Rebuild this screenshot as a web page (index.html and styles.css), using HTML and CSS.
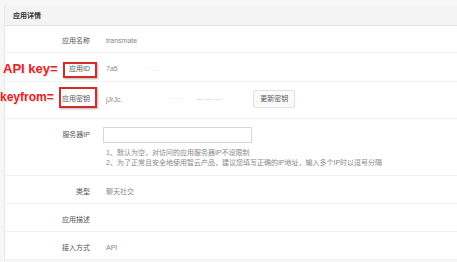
FILE: index.html
```html
<!DOCTYPE html>
<html>

<head>
  <title>应用详情</title>
  <link rel="stylesheet" href="styles.css">
</head>

<body>
  <div class="panel">
    <div class="panel-head">应用详情</div>

    <div class="row row-name">
      <span class="label">应用名称</span>
      <span class="value">transmate</span>
    </div>

    <div class="row row-id">
      <span class="label">应用ID</span>
      <span class="value">7a5<span class="blur">·&nbsp;.&nbsp;.</span></span>
    </div>

    <div class="row row-key">
      <span class="label">应用密钥</span>
      <span class="value">
        jJrJc.
        <span class="blur blur-key">·&nbsp;·&nbsp;·&nbsp;·</span>
        <span class="blur">—&nbsp;—&nbsp;—</span>
        <button class="btn">更新密钥</button>
      </span>
    </div>

    <div class="row row-ip">
      <span class="label">服务器IP</span>
      <div class="value">
        <input class="ip-input">
        <p class="hint">1、默认为空，对访问的应用服务器IP不设限制</p>
        <p class="hint">2、为了正常且安全地使用智云产品，建议您填写正确的IP地址，输入多个IP时以逗号分隔</p>
      </div>
    </div>

    <div class="row row-low">
      <span class="label">类型</span>
      <span class="value">聊天社交</span>
    </div>

    <div class="row row-low">
      <span class="label">应用描述</span>
      <span class="value"></span>
    </div>

    <div class="row row-low">
      <span class="label">接入方式</span>
      <span class="value">API</span>
    </div>
  </div>

  <!-- annotations drawn over the screenshot -->
  <span class="note note-api">API key=</span>
  <span class="mark mark-api"></span>
  <span class="note note-from">keyfrom=</span>
  <span class="mark mark-from"></span>
</body>

</html>
```

FILE: styles.css
```css
html {
  background-color: #f6f6f6;
  color: #666;
  font: 7px/1 "Liberation Sans", "Noto Sans CJK SC", sans-serif;
}

body {
  margin: 0;
  padding: 6px 0 0 4px;
  height: 256px;
  overflow: hidden;
  position: relative;
}

.panel {
  background-color: #fff;
  border-left: 1px solid #e8e8e8;
}

.panel-head {
  background-color: #f4f4f4;
  border-bottom: 1px solid #e4e4e4;
  height: 19px;
  line-height: 19px;
  padding-left: 8px;
  color: #333;
  font-weight: bold;
}

.row {
  display: grid;
  grid-template-columns: 85px 1fr;
  column-gap: 16px;
  align-items: center;
  border-bottom: 1px solid #f0f0f0;
  height: 28px;
  box-sizing: border-box;
}

.row-name {
  height: 27px;
  padding-top: 2px;
}

.row-id {
  height: 29px;
  padding-top: 3px;
}

.row-key {
  height: 37px;
  padding-bottom: 3px;
}

.row-ip {
  height: 57px;
  align-items: start;
  padding-top: 8px;
}

.row-low {
  padding-top: 4px;
}

.label {
  text-align: right;
  color: #555;
}

.row-ip .label {
  line-height: 16px;
}

.value {
  color: #888;
}

.blur {
  color: #ccc;
  margin-left: 30px;
}

.blur-key {
  margin-left: 45px;
}

.blur + .blur {
  margin-left: 10px;
}

.btn {
  margin-left: 30px;
  font: 7px/1 "Liberation Sans", "Noto Sans CJK SC", sans-serif;
  color: #555;
  background-color: #fafafa;
  border: 1px solid #e0e0e0;
  border-radius: 2px;
  height: 18px;
  padding: 0 6px;
}

.ip-input {
  display: block;
  width: 149px;
  height: 16px;
  box-sizing: border-box;
  border: 1px solid #d6d6d6;
  margin: 0 0 0 -3px;
  outline: none;
}

.hint {
  margin: 0;
  line-height: 10px;
  color: #888;
}

.hint:first-of-type {
  margin-top: 5px;
}

.note {
  position: absolute;
  color: #e52222;
  font: bold 13px/1 "Liberation Sans", sans-serif;
  text-shadow: 0 0 1px #fff, 1px 1px 1px rgba(0, 0, 0, .15);
}

.note-api {
  left: 3px;
  top: 62px;
}

.note-from {
  left: 0;
  top: 91px;
  font-size: 12px;
}

.mark {
  position: absolute;
  border: 2px solid #d42a2a;
  box-shadow: 1px 1px 2px rgba(0, 0, 0, .3);
}

.mark-api {
  left: 63px;
  top: 62px;
  width: 30px;
  height: 12px;
}

.mark-from {
  left: 59px;
  top: 87px;
  width: 34px;
  height: 17px;
}
```
